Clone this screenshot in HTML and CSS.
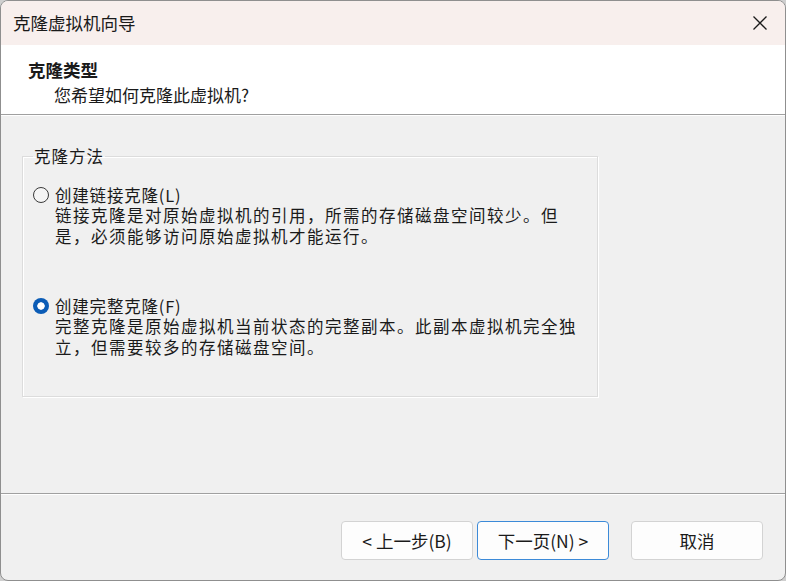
FILE: index.html
```html
<!DOCTYPE html>
<html lang="zh-CN">
<head>
<meta charset="utf-8">
<title>克隆虚拟机向导</title>
<link rel="stylesheet" href="styles.css">
</head>
<body>
<div class="window">
  <div class="titlebar">
    <span class="title">克隆虚拟机向导</span>
    <span class="close">
      <svg width="16" height="16" viewBox="0 0 16 16"><path d="M1.5 1.5 L14.5 14.5 M14.5 1.5 L1.5 14.5" stroke="#1a1a1a" stroke-width="1.3" fill="none"/></svg>
    </span>
  </div>
  <div class="header">
    <div class="h-title">克隆类型</div>
    <div class="h-sub">您希望如何克隆此虚拟机?</div>
  </div>
  <div class="content">
    <fieldset class="group">
      <legend class="legend">克隆方法</legend>
      <div class="option">
        <div class="opt-row"><span class="radio"></span><span class="opt-label">创建链接克隆(L)</span></div>
        <div class="desc">链接克隆是对原始虚拟机的引用，所需的存储磁盘空间较少。但<br>是，必须能够访问原始虚拟机才能运行。</div>
      </div>
      <div class="option second">
        <div class="opt-row"><span class="radio checked"></span><span class="opt-label">创建完整克隆(F)</span></div>
        <div class="desc">完整克隆是原始虚拟机当前状态的完整副本。此副本虚拟机完全独<br>立，但需要较多的存储磁盘空间。</div>
      </div>
    </fieldset>
  </div>
  <div class="footer">
    <button class="btn">&lt; 上一步(B)</button>
    <button class="btn primary">下一页(N) &gt;</button>
    <button class="btn cancel">取消</button>
  </div>
</div>
</body>
</html>
```
FILE: styles.css
```css
html, body {
  margin: 0;
  padding: 0;
}
body {
  width: 786px;
  height: 581px;
  background: #cfcfcf;
  overflow: hidden;
  font-family: "Noto Sans CJK SC", "Noto Sans", sans-serif;
  color: #1a1a1a;
}
.window {
  width: 786px;
  height: 581px;
  box-sizing: border-box;
  border: 1px solid #8f8f8f;
  border-radius: 8px;
  overflow: hidden;
  background: #f0f0f0;
  display: flex;
  flex-direction: column;
}
.titlebar {
  height: 44px;
  background: #f8efed;
  display: flex;
  align-items: center;
  justify-content: space-between;
  padding: 0 17px 0 12px;
  flex: none;
}
.title {
  font-size: 17.5px;
  line-height: 24px;
  color: #1a1a1a;
}
.close {
  display: flex;
  width: 16px;
  height: 16px;
}
.header {
  height: 70px;
  background: #ffffff;
  border-bottom: 1px solid #a0a0a0;
  box-sizing: border-box;
  padding: 13px 0 0 27px;
  flex: none;
}
.h-title {
  font-size: 17.5px;
  font-weight: 700;
  line-height: 24px;
}
.h-sub {
  font-size: 17px;
  line-height: 24px;
  padding-left: 26px;
  margin-top: 1px;
}
.content {
  height: 378px;
  border-top: 1px solid #ffffff;
  box-sizing: border-box;
  padding: 30px 0 0 21px;
  flex: none;
}
.group {
  margin: 0;
  width: 576px;
  height: 251px;
  box-sizing: border-box;
  border: 1px solid #dcdcdc;
  box-shadow: 1px 1px 0 #ffffff, inset 1px 1px 0 #ffffff;
  padding: 19px 0 0 10px;
  font-size: 16.5px;
  letter-spacing: 1.5px;
}
.legend {
  padding: 0 1px;
  margin-left: 0;
  font-size: 16.5px;
  line-height: 20px;
  letter-spacing: 1px;
}
.opt-row {
  display: flex;
  align-items: center;
  height: 20px;
}
.radio {
  width: 14px;
  height: 14px;
  border: 1px solid #3a3a3a;
  border-radius: 50%;
  box-sizing: content-box;
  margin-right: 6px;
  background: #f5f5f5;
}
.radio.checked {
  width: 16px;
  height: 16px;
  border: none;
  background: radial-gradient(circle, #ffffff 0 3.4px, #0b5cb6 4px);
}
.opt-label {
  line-height: 20px;
  letter-spacing: 0.8px;
}
.desc {
  padding-left: 22px;
  line-height: 20.5px;
  white-space: nowrap;
}
.option.second {
  margin-top: 50px;
}
.footer {
  flex: 1;
  border-top: 1px solid #a0a0a0;
  box-shadow: inset 0 1px 0 #ffffff;
  display: flex;
  justify-content: flex-end;
  align-items: flex-start;
  padding: 27px 22px 0 0;
}
.btn {
  width: 132px;
  height: 39px;
  box-sizing: border-box;
  background: #fdfdfd;
  border: 1px solid #d3d3d3;
  border-radius: 4px;
  font-family: "Noto Sans CJK SC", "Noto Sans", sans-serif;
  font-size: 17.5px;
  color: #1a1a1a;
  padding: 0;
  margin: 0;
}
.btn.primary {
  margin-left: 4px;
  border-color: #3c8ad8;
}
.btn.cancel {
  margin-left: 22px;
}
```
